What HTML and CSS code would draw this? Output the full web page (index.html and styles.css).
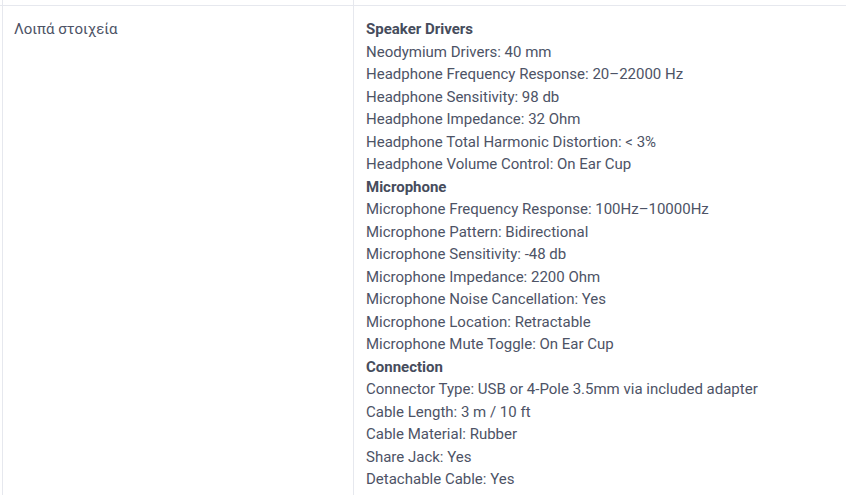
FILE: index.html
```html
<!DOCTYPE html>
<html lang="el">
<head>
<meta charset="utf-8">
<link rel="stylesheet" href="styles.css">
</head>
<body>
<div class="spec-table">
  <div class="row row-prev">
    <div class="cell label"></div>
    <div class="cell value"></div>
  </div>
  <div class="row">
    <div class="cell label">Λοιπά στοιχεία</div>
    <div class="cell value">
      <div class="head">Speaker Drivers</div>
      <div>Neodymium Drivers: 40 mm</div>
      <div>Headphone Frequency Response: 20–22000 Hz</div>
      <div>Headphone Sensitivity: 98 db</div>
      <div>Headphone Impedance: 32 Ohm</div>
      <div>Headphone Total Harmonic Distortion: &lt; 3%</div>
      <div>Headphone Volume Control: On Ear Cup</div>
      <div class="head">Microphone</div>
      <div>Microphone Frequency Response: 100Hz–10000Hz</div>
      <div>Microphone Pattern: Bidirectional</div>
      <div>Microphone Sensitivity: -48 db</div>
      <div>Microphone Impedance: 2200 Ohm</div>
      <div>Microphone Noise Cancellation: Yes</div>
      <div>Microphone Location: Retractable</div>
      <div>Microphone Mute Toggle: On Ear Cup</div>
      <div class="head">Connection</div>
      <div>Connector Type: USB or 4-Pole 3.5mm via included adapter</div>
      <div>Cable Length: 3 m / 10 ft</div>
      <div>Cable Material: Rubber</div>
      <div>Share Jack: Yes</div>
      <div>Detachable Cable: Yes</div>
    </div>
  </div>
</div>
</body>
</html>
```
FILE: styles.css
```css
html, body {
  margin: 0;
  padding: 0;
  background: #ffffff;
}
body {
  font-family: Roboto, "Noto Sans", sans-serif;
  font-size: 15px;
  line-height: 22.5px;
  color: #4d5366;
  overflow: hidden;
}
.spec-table {
  width: 846px;
}
.row {
  display: grid;
  grid-template-columns: 351px 1fr;
  padding-left: 2px;
  border-top: 1px solid #e6e8ee;
}
.row-prev {
  height: 5px;
  border-top: none;
}
.cell {
  border-left: 1px solid #e6e8ee;
}
.label {
  padding: 12px 12px 12px 11px;
}
.value {
  padding: 12px 12px 12px 12px;
}
.head {
  font-weight: 700;
  color: #464c5c;
}
```
